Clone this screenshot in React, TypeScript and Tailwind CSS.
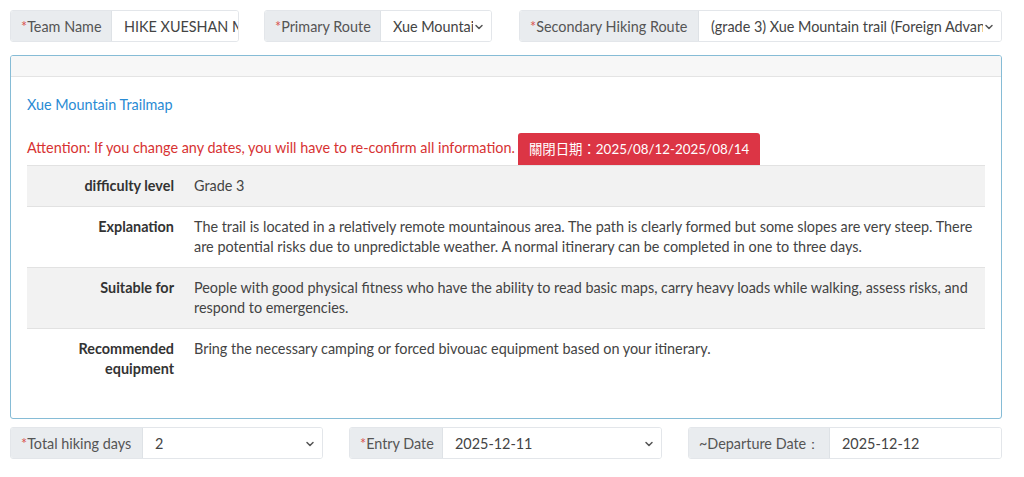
import { ChevronDown } from "lucide-react";

const ROWS = [
  { label: "difficulty level", value: "Grade 3" },
  {
    label: "Explanation",
    value:
      "The trail is located in a relatively remote mountainous area. The path is clearly formed but some slopes are very steep. There are potential risks due to unpredictable weather. A normal itinerary can be completed in one to three days.",
  },
  {
    label: "Suitable for",
    value:
      "People with good physical fitness who have the ability to read basic maps, carry heavy loads while walking, assess risks, and respond to emergencies.",
  },
  {
    label: "Recommended equipment",
    value: "Bring the necessary camping or forced bivouac equipment based on your itinerary.",
  },
];

const Label = ({ children, required = true, w }: { children: React.ReactNode; required?: boolean; w: string }) => (
  <div className={`${w} shrink-0 flex items-center px-[10px] pt-px bg-[#e9ecef] border-r border-[#dee2e6] text-[#555] whitespace-nowrap overflow-hidden`}>
    {required && <span className="text-[#d9534f]">*</span>}
    {children}
  </div>
);

const Field = ({ value, select }: { value: string; select?: boolean }) => (
  <div className={`flex-1 min-w-0 flex items-center pl-[12px] pt-px text-[#444] bg-white ${select ? "pr-[6px]" : "pr-0"}`}>
    <span className="flex-1 min-w-0 overflow-hidden whitespace-nowrap">{value}</span>
    {select && <ChevronDown className="size-3 shrink-0 text-[#555]" strokeWidth={3} />}
  </div>
);

const Group = ({ className, children }: { className: string; children: React.ReactNode }) => (
  <div className={`${className} h-[32px] flex rounded-[3px] border border-[#e3e6ea] overflow-hidden`}>{children}</div>
);

export default function App() {
  return (
    <div className="w-[1024px] h-[477px] bg-white text-[14.4px] text-[#333] font-['Lato','Noto_Sans',sans-serif] px-[10px] pt-[10px] overflow-hidden">
      <div className="flex items-start">
        <Group className="w-[229px]">
          <Label w="w-[101px]">Team Name</Label>
          <Field value="HIKE XUESHAN MOUNTAIN" />
        </Group>
        <Group className="w-[228px] ml-[25px]">
          <Label w="w-[116px]">Primary Route</Label>
          <Field value="Xue Mountain trail" select />
        </Group>
        <Group className="w-[483px] ml-[27px]">
          <Label w="w-[179px]">Secondary Hiking Route</Label>
          <Field value="(grade 3) Xue Mountain trail (Foreign Advanced)" select />
        </Group>
      </div>

      <div className="mt-[13px] w-[992px] h-[364px] border border-[#86bcd6] rounded-[3px] overflow-hidden">
        <div className="h-[21px] bg-[#f7f7f7] border-b border-[#e4e4e4]" />
        <div className="px-[16px] pt-[17px]">
          <a className="text-[#2a8bd4] leading-[20px]">Xue Mountain Trailmap</a>
          <div className="mt-[17px] flex items-end">
            <span className="text-[#d73333] leading-[20px] mb-[7px]">
              Attention: If you change any dates, you will have to re-confirm all information.
            </span>
            <span className="ml-[3px] h-[32px] px-[11px] flex items-center bg-[#dc3545] text-white text-[13.4px] rounded-t-[3px] font-['Lato','Noto_Sans_CJK_TC',sans-serif]">
              關閉日期：2025/08/12-2025/08/14
            </span>
          </div>
          <table className="w-[958px] border-collapse">
            <tbody>
              {ROWS.map((r, i) => (
                <tr key={r.label} className={`border-t border-[#e2e2e2] ${i % 2 === 0 ? "bg-[#f2f2f2]" : "bg-white"}`}>
                  <th className="w-[157px] text-right align-top font-bold text-[#333] pl-[10px] pr-[10px] py-[10px] leading-[20px]">
                    {r.label}
                  </th>
                  <td className={`align-top pl-[10px] pr-[10px] leading-[20px] text-[#444] ${i === 3 ? "pt-[10px] pb-[16px]" : "py-[10px]"}`}>
                    {r.value}
                  </td>
                </tr>
              ))}
            </tbody>
          </table>
        </div>
      </div>

      <div className="mt-[8px] flex items-start">
        <Group className="w-[313px]">
          <Label w="w-[132px]">Total hiking days</Label>
          <Field value="2" select />
        </Group>
        <Group className="w-[313px] ml-[26px]">
          <Label w="w-[93px]">Entry Date</Label>
          <Field value="2025-12-11" select />
        </Group>
        <Group className="w-[314px] ml-[26px]">
          <Label w="w-[141px]" required={false}>~Departure Date：</Label>
          <Field value="2025-12-12" />
        </Group>
      </div>
    </div>
  );
}
